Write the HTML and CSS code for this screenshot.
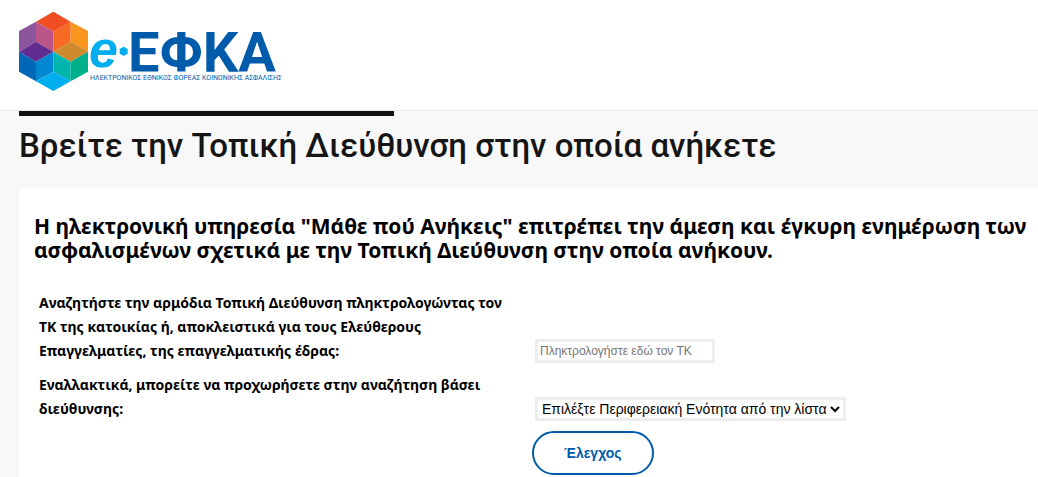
FILE: index.html
```html
<!DOCTYPE html>
<html lang="el">
<head>
<meta charset="utf-8">
<meta name="viewport" content="width=device-width, initial-scale=1.0">
<title>e-ΕΦΚΑ</title>
<link rel="stylesheet" href="styles.css">
</head>

<body>

<header class="header">
<a class="logo" href="#" aria-label="e-ΕΦΚΑ">
<svg width="262" height="80" viewBox="0 0 262 80">
  <g transform="translate(-19 -12) scale(.3333)">
    <path fill="#f04e23" d="M160 35l52 30-52 30-52-30z"/>
    <path fill="#8e559f" d="M57 93l51-28v60l-51 30z"/>
    <path fill="#b95587" d="M108 65l52 30v60l-52-30z"/>
    <path fill="#f66a23" d="M160 95l52-30v60l-52 30z"/>
    <path fill="#f8951f" d="M212 65l52 28v62l-52-30z"/>
    <path fill="#612d91" d="M57 155l51-30 52 30-52 30z"/>
    <path fill="#cd8a2e" d="M160 155l52-30 52 30-52 30z"/>
    <path fill="#0066b6" d="M57 155l51 30v59l-51-29z"/>
    <path fill="#0088d2" d="M108 185l52-30v60l-52 29z"/>
    <path fill="#00b5ad" d="M160 155l52 30v59l-52-29z"/>
    <path fill="#00b08c" d="M212 185l52-30v60l-52 29z"/>
    <path fill="#00adef" d="M108 244l52-29 52 29-52 29z"/>
    <path fill="#00adef" d="M371 140l12 7v14l-12 7-12-7v-14z"/>
  </g>
  <text class="logo-e" x="70" y="55">e</text>
  <text class="logo-name" x="109" y="60">ΕΦΚΑ</text>
  <text class="logo-full" x="71" y="68">ΗΛΕΚΤΡΟΝΙΚΟΣ ΕΘΝΙΚΟΣ ΦΟΡΕΑΣ ΚΟΙΝΩΝΙΚΗΣ ΑΣΦΑΛΙΣΗΣ</text>
</svg>
</a>
</header>

<main class="content">
<div class="bar"></div>
<h1>Βρείτε την Τοπική Διεύθυνση στην οποία ανήκετε</h1>

<form class="panel">
<h2>Η ηλεκτρονική υπηρεσία "Μάθε πού Ανήκεις" επιτρέπει την άμεση και έγκυρη ενημέρωση των ασφαλισμένων σχετικά με την Τοπική Διεύθυνση στην οποία ανήκουν.</h2>

<div class="fields">
  <label for="tk">Αναζητήστε την αρμόδια Τοπική Διεύθυνση πληκτρολογώντας τον ΤΚ της κατοικίας ή, αποκλειστικά για τους Ελεύθερους Επαγγελματίες, της επαγγελματικής έδρας:</label>
  <input class="box" type="text" id="tk" name="tk" placeholder="Πληκτρολογήστε εδώ τον ΤΚ">

  <label for="area">Εναλλακτικά, μπορείτε να προχωρήσετε στην αναζήτηση βάσει διεύθυνσης:</label>
  <select class="box" id="area" name="area">
    <option>Επιλέξτε Περιφερειακή Ενότητα από την λίστα</option>
  </select>

  <button class="check" type="submit">Έλεγχος</button>
</div>
</form>
</main>

</body>
</html>
```
FILE: styles.css
```css
* {box-sizing: border-box;}

body {
  margin: 0;
  background-color: #f8f8f8;
  color: #000;
  font-family: "Source Sans Pro", "Noto Sans", sans-serif;
}

.header {
  padding: 12px 19px 18px;
  background-color: #fff;
  border-bottom: 1px solid #e8e8e8;
}

.logo, .logo svg {
  display: block;
}

.logo {
  width: 262px;
}

.logo-e {
  font: italic bold 52px "Liberation Sans", sans-serif;
  fill: #00adef;
}

.logo-name {
  font: bold 56px Roboto, sans-serif;
  fill: #005bab;
}

.logo-full {
  font: 7px Roboto, sans-serif;
  fill: #005bab;
}

.content {
  padding-left: 19px;
}

.bar {
  width: 375px;
  max-width: 100%;
  height: 5px;
  background-color: #111;
}

h1 {
  margin: 0;
  padding: 9px 0 23px;
  color: #151515;
  font-family: "Source Sans Pro", Roboto, sans-serif;
  font-size: 33px;
  font-weight: 500;
  line-height: 41px;
}

.panel {
  padding: 25px 8px 8px 15px;
  background-color: #fff;
}

h2 {
  margin: 0 0 29px;
  font-size: 21px;
  font-weight: 700;
  line-height: 24px;
}

.fields {
  display: grid;
  grid-template-columns: 480px 1fr;
  column-gap: 13px;
  row-gap: 10px;
  padding: 0 5px;
  align-items: end;
  justify-items: start;
}

label {
  font-size: 14px;
  font-weight: 700;
  line-height: 24px;
}

.box {
  height: 24px;
  margin: 0 3px;
  border: 3px solid #eee;
  background-color: #fff;
  color: #000;
  font-family: "Liberation Sans", sans-serif;
}

input.box {
  width: 180px;
  padding: 0 2px;
  font-size: 12px;
}

input.box::placeholder {
  color: #757575;
}

select.box {
  font-size: 14px;
}

.check {
  grid-column: 2;
  height: 44px;
  padding: 0 30px;
  border: 2px solid #005bab;
  border-radius: 22px;
  background-color: #fff;
  color: #005bab;
  font: bold 14px "Liberation Sans", sans-serif;
  cursor: pointer;
}
```
